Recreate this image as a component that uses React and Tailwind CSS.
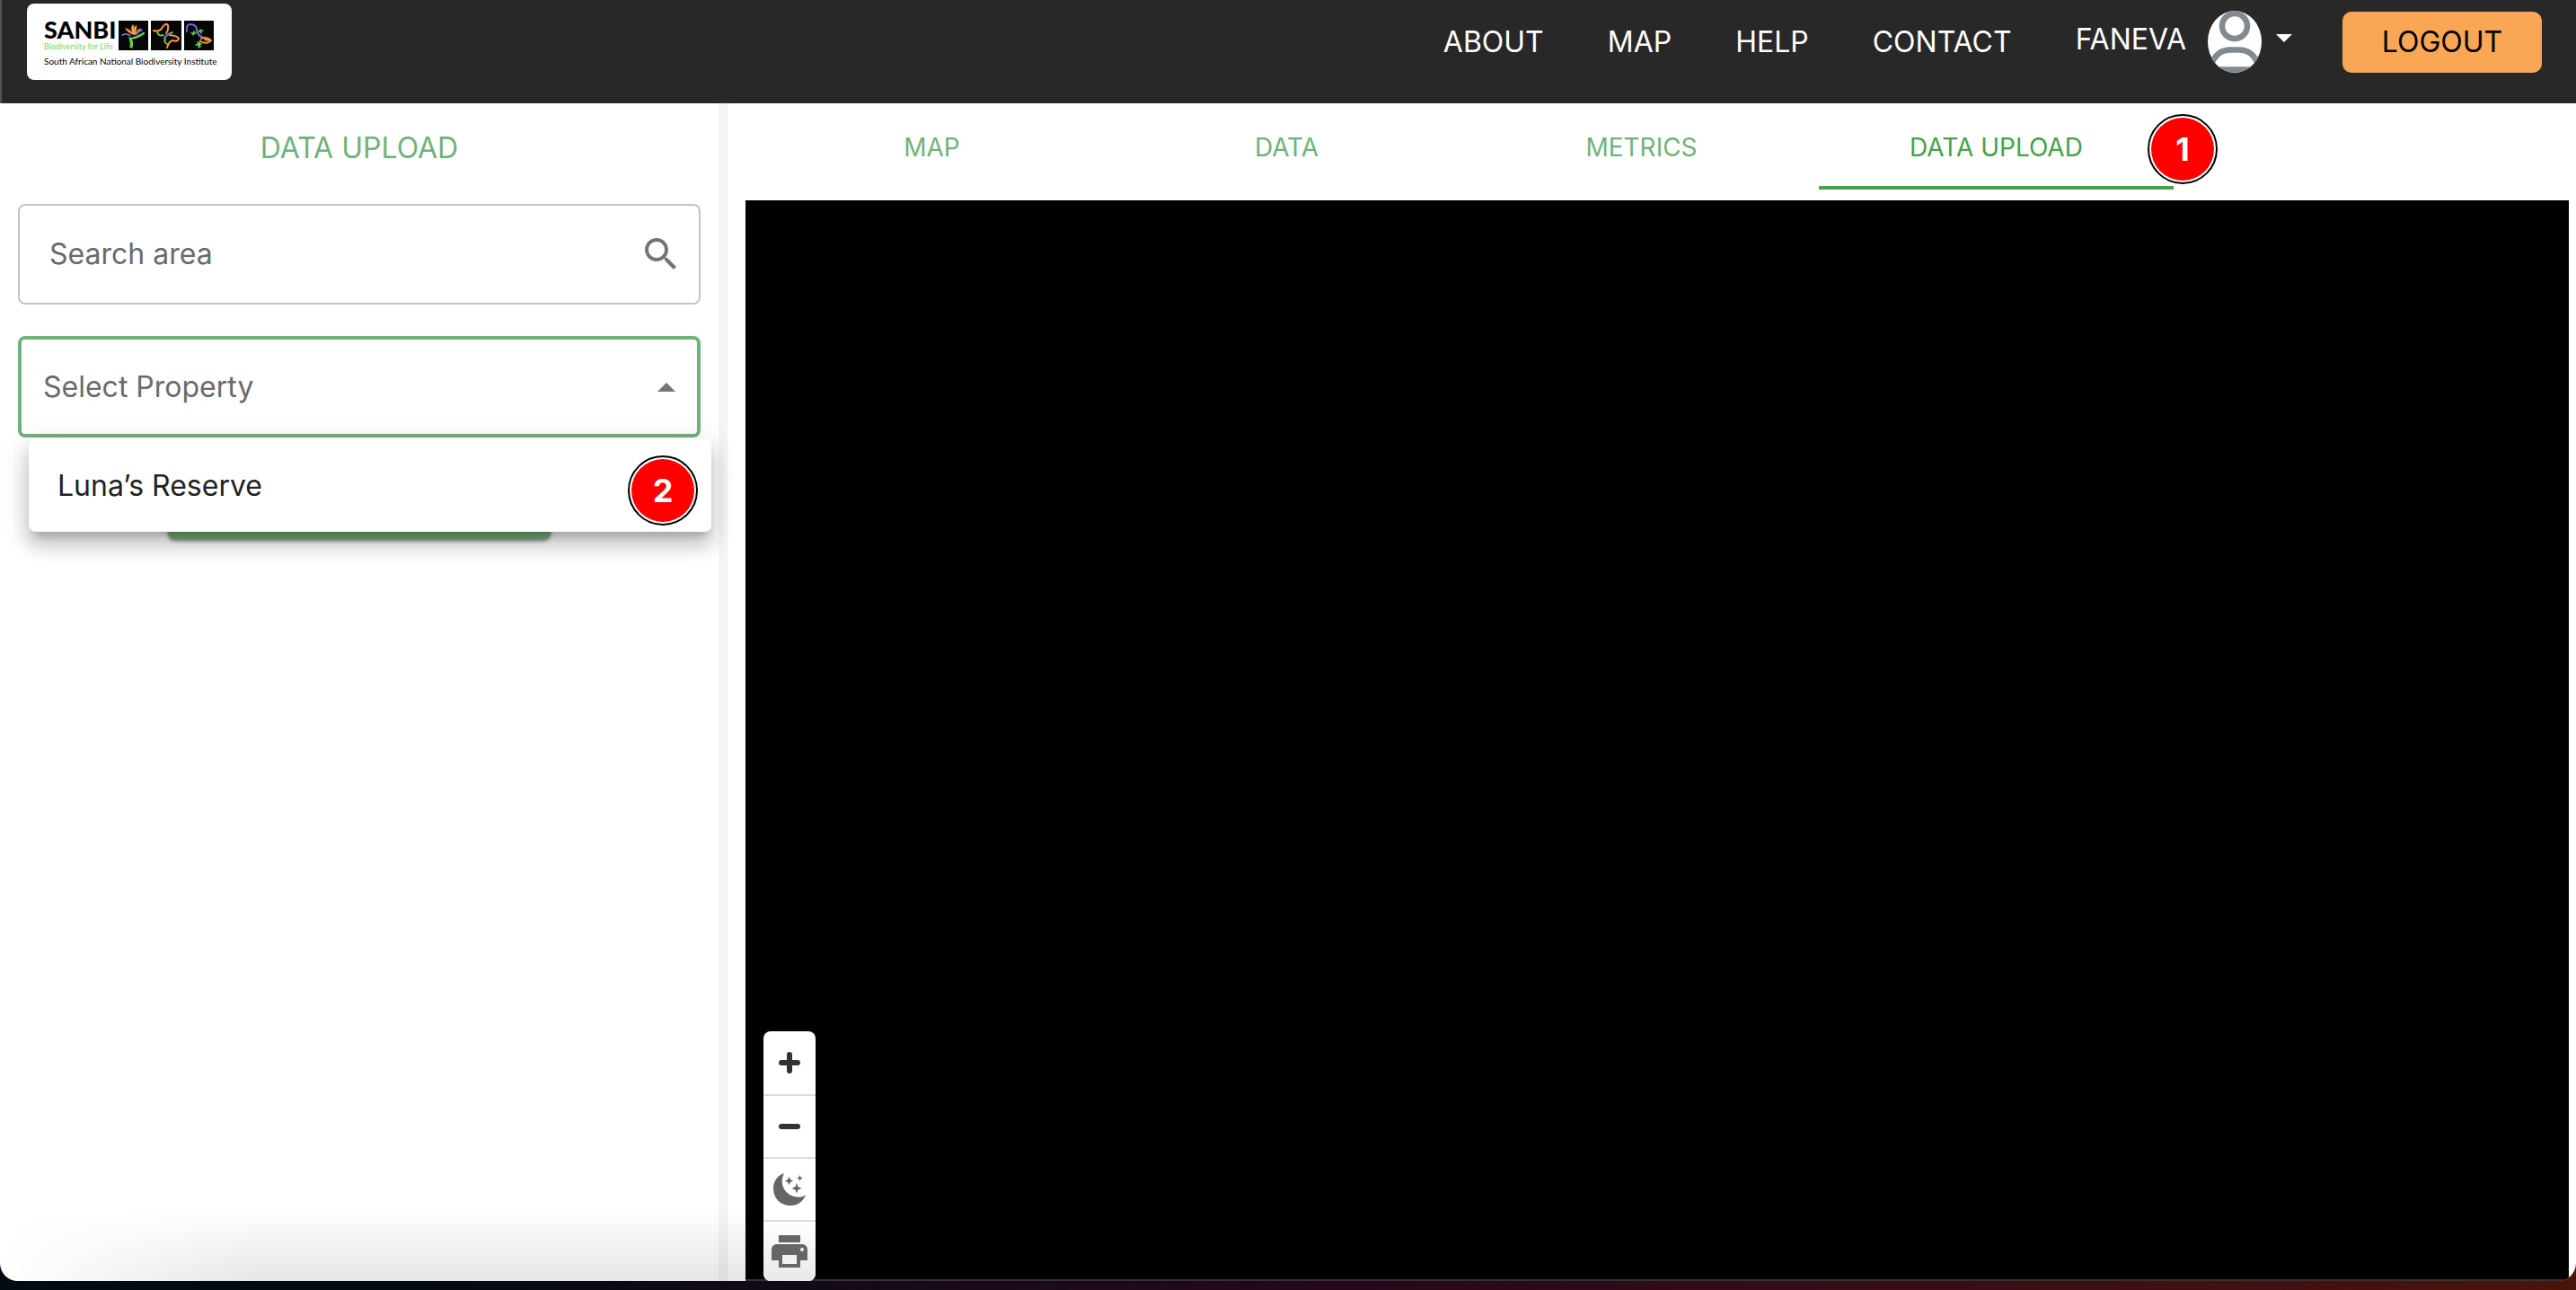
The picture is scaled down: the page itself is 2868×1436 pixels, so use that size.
const navLinks = ["ABOUT", "MAP", "HELP", "CONTACT"];
const tabs = ["MAP", "DATA", "METRICS", "DATA UPLOAD"];

function Logo() {
  return (
    <a href="#" aria-label="SANBI" className="flex h-[85px] w-[228px] flex-col rounded-lg bg-white px-[19px] pt-[19px] text-black">
      <div className="flex justify-between">
        <div className="font-['Lato',sans-serif]">
          <div className="text-[27px] leading-5 font-black">SANBI</div>
          <div className="mt-[3px] text-[9px] leading-3 whitespace-nowrap text-[#6fdc5c]">Biodiversity for Life</div>
        </div>
        <svg width="107" height="33" viewBox="0 0 107 33" fill="none" strokeLinecap="round" className="shrink-0" aria-hidden="true">
          <path d="M0 0h33v33H0zM36 0h34v33H36zM73 0h33v33H73z" fill="#060606" />
          <path d="M17 16Q9 13 7 8Q12 9 15 13Q13 7 16 4Q17 6 18 8Q19 4 20 5Q21 9 19 13Q22 9 25 8Q24 13 18 16Z" fill="#f39a3e" />
          <path d="M4 16Q8 13.500 13 16.500M20 15Q23 11 26 10.500" stroke="#7a68d8" strokeWidth="1.800" />
          <path d="M28 14Q22 18.500 13 20" stroke="#63d94e" strokeWidth="2.200" />
          <path d="M12 18.500Q17 21 15 30L13 30Q14 25 12 18.500Z" fill="#63d94e" stroke="#63d94e" />
          <path d="M39 11Q46 13 49 7Q53 2 55 5Q56 10 53 14M57 16Q66 17 67 20Q66 24 60 22Q56 23 54 30" stroke="#f39a3e" strokeWidth="2" />
          <path d="M51 19Q54 16 57 14" stroke="#7a68d8" strokeWidth="2.200" />
          <path d="M43 13Q45 18 50 16M52 20Q50 24 54 26M58 14l2-1" stroke="#63d94e" strokeWidth="1.800" />
          <path d="M76 12Q75 4 80 4Q87 4 87 11Q88 17 95 19" stroke="#7a68d8" strokeWidth="2" />
          <path d="M81 14l5 0M84 12l-1 4M89 12l5-1M91 10l1 4M86 27l6-1M91 22l-2 8M88 24l3 5" stroke="#63d94e" strokeWidth="1.500" />
          <path d="M92 20Q98 17 103 22Q99 27 91 23M96 21l6 1" stroke="#f39a3e" strokeWidth="1.800" />
        </svg>
      </div>
      <div className="mt-1 font-['Lato',sans-serif] text-[10px] leading-3 whitespace-nowrap">South African National Biodiversity Institute</div>
    </a>
  );
}

function Badge({ children }) {
  return (
    <span className="flex size-[78px] items-center justify-center rounded-full border-2 border-black bg-white p-[2px]">
      <span className="flex size-full items-center justify-center rounded-full bg-[#fe0000] text-4xl font-bold text-white">{children}</span>
    </span>
  );
}

function Header() {
  return (
    <header className="flex h-[115px] items-start justify-between border-l-2 border-[#555] bg-[#282828] pr-[38px] pl-7 text-[32px] leading-10 text-white">
      <div className="pt-1"><Logo /></div>
      <div className="flex items-start">
        <nav className="flex gap-[71px] pt-[27px] pr-[71px]">
          {navLinks.map((label) => <a key={label} href="#">{label}</a>)}
        </nav>
        <button type="button" className="mt-3 flex h-[69px] items-center gap-6">
          <span className="-mt-[5px]">FANEVA</span>
          <svg width="60" height="69" viewBox="0 0 60 69" aria-hidden="true">
            <clipPath id="avatar"><ellipse cx="30" cy="34.5" rx="30" ry="34.5" /></clipPath>
            <g clipPath="url(#avatar)">
              <path d="M0 0h60v69H0z" fill="#fff" />
              <g fill="none" stroke="#828a91" strokeWidth="6.500">
                <circle cx="30" cy="17" r="14" />
                <path d="M4 60Q10 43.500 25 43.500H35Q50 43.500 56 60M0 65.500H60" />
              </g>
            </g>
          </svg>
          <svg width="18" height="9" viewBox="0 0 18 9" className="-ml-2 mb-2" aria-hidden="true"><path d="M0 0h18L9 9z" fill="#fff" /></svg>
        </button>
        <button type="button" className="mt-[13px] ml-14 h-[68px] w-[222px] rounded-[10px] bg-[#f9a755] text-black">LOGOUT</button>
      </div>
    </header>
  );
}

function Sidebar() {
  return (
    <aside className="w-[810px] shrink-0 border-r-[10px] border-[#f5f3f4] px-5 pt-[30px]">
      <h1 className="text-center text-[32px] leading-10 text-[#70b37a]">DATA UPLOAD</h1>
      <div className="mt-[42px] flex h-28 items-center rounded-lg border-2 border-[#c4c4c4] pr-[18px] pl-[33px]">
        <input type="text" aria-label="Search area" placeholder="Search area" className="h-12 min-w-0 flex-1 text-[32px] outline-none placeholder:text-[#6a6a6a]" />
        <svg width="48" height="48" viewBox="0 0 24 24" fill="#757575" aria-hidden="true">
          <path d="M15.500 14h-.79l-.28-.27C15.410 12.590 16 11.110 16 9.500 16 5.910 13.090 3 9.500 3S3 5.910 3 9.500 5.910 16 9.500 16c1.610 0 3.090-.59 4.230-1.570l.27.28v.79l5 4.990L20.490 19l-4.990-5zm-6 0C7.010 14 5 11.990 5 9.500S7.010 5 9.500 5 14 7.010 14 9.500 11.990 14 9.500 14z" />
        </svg>
      </div>
      <div className="relative mt-[35px]">
        <button type="button" aria-haspopup="listbox" aria-expanded="true" className="flex h-[113px] w-full items-center justify-between rounded-lg border-4 border-[#70b37a] pt-px pr-6 pl-6 text-[32px] leading-10 text-[#6a6a6a]">
          Select Property
          <svg width="20" height="10" viewBox="0 0 20 10" aria-hidden="true"><path d="M0 10h20L10 0z" fill="#757575" /></svg>
        </button>
        <ul role="listbox" aria-label="Property" className="absolute top-[114px] left-3 z-10 w-full rounded-lg bg-white shadow-[0_10px_10px_-6px_rgba(0,0,0,0.2),0_16px_20px_2px_rgba(0,0,0,0.14),0_6px_28px_4px_rgba(0,0,0,0.12)]">
          <li role="option" aria-selected="false" className="flex justify-between pt-[19px] pr-[15px] pb-[7px] pl-8 text-[32px] leading-[68px] text-[#222]">
            Luna’s Reserve
            <Badge>2</Badge>
          </li>
        </ul>
      </div>
      <button type="button" aria-label="Upload" className="mx-auto mt-10 block h-[73px] w-[426px] rounded-lg bg-[#70b37a] shadow-[0_2px_4px_rgba(0,0,0,0.5)]" />
    </aside>
  );
}

function MapControls() {
  const item = "flex h-[70px] w-full items-center justify-center border-b-2 border-[#ddd]";
  return (
    <div className="w-[58px] overflow-hidden rounded-lg bg-white">
      <button type="button" aria-label="Zoom in" className="flex h-[72px] w-full items-center justify-center border-b-2 border-[#ddd]">
        <svg width="24" height="24" viewBox="0 0 24 24" stroke="#333" strokeWidth="6" strokeLinecap="round"><path d="M3 12h18M12 3v18" /></svg>
      </button>
      <button type="button" aria-label="Zoom out" className={item}>
        <svg width="24" height="24" viewBox="0 0 24 24" stroke="#333" strokeWidth="6" strokeLinecap="round"><path d="M3 12h18" /></svg>
      </button>
      <button type="button" aria-label="Dark mode" className={item}>
        <svg width="36" height="36" viewBox="0 0 36 36" fill="#666"><path d="M12 0C4 3 0 9 0 17c0 11 8 19 19 19 8 0 14-4 17-12-4 3-8 3-12 2C13 24 6 12 12 0zM17.500 4l1.500 3 3 1.500-3 1.500-1.500 3-1.500-3-3-1.500 3-1.500zM29.500 2l1 2.500L33 5.500l-2.500 1-1 2.500-1-2.500-2.500-1 2.500-1zM26 11l1.500 4 4 2-4 1.500-1.500 4-1.500-4-4-1.500 4-2z" /></svg>
      </button>
      <button type="button" aria-label="Print" className="flex h-[66px] w-full items-center justify-center bg-linear-to-b from-white to-[#e8e8e8]">
        <svg width="48" height="48" viewBox="0 0 24 24" fill="#666"><path d="M19 8H5c-1.660 0-3 1.340-3 3v6h4v4h12v-4h4v-6c0-1.660-1.340-3-3-3zm-3 11H8v-5h8v5zm3-7c-.55 0-1-.45-1-1s.45-1 1-1 1 .45 1 1-.45 1-1 1zm-1-9H6v4h12V3z" /></svg>
      </button>
    </div>
  );
}

export default function App() {
  return (
    <div className="flex min-h-screen flex-col bg-linear-to-r from-[#020a12] from-15% via-[#26061c] via-50% to-[#4a1408] pb-[10px] font-['Inter',sans-serif]">
      <div className="relative flex flex-1 flex-col overflow-hidden rounded-b-[20px] bg-white">
        <Header />
        <div className="flex flex-1">
          <Sidebar />
          <main className="flex min-w-0 flex-1 flex-col pr-2 pl-5">
            <div className="flex h-[108px] pl-[10px]">
              {tabs.map((tab) => (
                <button
                  key={tab}
                  type="button"
                  className={
                    tab === "DATA UPLOAD"
                      ? "relative mb-3 w-[395px] border-b-4 border-[#45a249] pt-[6px] text-[28px] text-[#45a249]"
                      : "relative mb-3 w-[395px] border-b-4 border-transparent pt-[6px] text-[28px] text-[#70b37a]"
                  }
                >
                  {tab}
                  {tab === "DATA UPLOAD" && <span className="absolute top-3 -right-[49px]"><Badge>1</Badge></span>}
                </button>
              ))}
            </div>
            <section aria-label="Map" className="flex flex-1 items-end bg-black pl-5 shadow-[inset_0_-2px_0_#333]">
              <MapControls />
            </section>
          </main>
        </div>
        <div className="pointer-events-none absolute bottom-0 left-0 h-20 w-[830px] bg-linear-to-t from-black/10 to-transparent mask-l-from-65%" />
      </div>
    </div>
  );
}
